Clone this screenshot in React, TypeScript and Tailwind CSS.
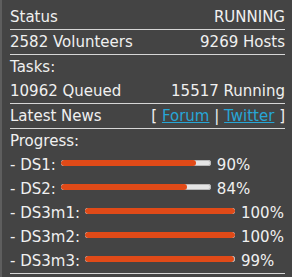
import React from "react";

const Bar = ({ pct }: { pct: number }) => (
  <div className="w-[150px] h-[6px] rounded-full bg-[#e4e4e4] overflow-hidden self-start mt-[7px] shadow-[inset_0_0_0_1px_#b8b8b8]">
    <div className="h-full rounded-full bg-[#e04a18]" style={{ width: `${pct}%` }} />
  </div>
);

const ProgRow = ({ label, pct, last }: { label: string; pct: number; last?: boolean }) => (
  <div className={`flex h-[24px] items-center gap-[5px] leading-[24px] ${last ? "border-b border-[#d6d6d6] h-[25px]" : ""}`}>
    <span className="self-start">{label}</span>
    <Bar pct={pct} />
    <span className="self-start pl-[1px]">{pct}%</span>
  </div>
);

export default function App() {
  return (
    <div
      className="w-[292px] h-[277px] bg-[#444444] border-l-2 border-[#5e5e5e] pl-[8px] pr-[7px] pt-[5px] text-[#f0f0f0] text-[15px] leading-[24px]"
      style={{ fontFamily: '"DejaVu Sans", sans-serif' }}
    >
      <div className="flex justify-between h-[25px] border-b border-[#d6d6d6]">
        <span>Status</span>
        <span>RUNNING</span>
      </div>
      <div className="flex justify-between h-[25px] border-b border-[#d6d6d6]">
        <span>2582 Volunteers</span>
        <span>9269 Hosts</span>
      </div>
      <div className="h-[24px]">Tasks:</div>
      <div className="flex justify-between h-[25px] border-b border-[#d6d6d6]">
        <span>10962 Queued</span>
        <span>15517 Running</span>
      </div>
      <div className="flex justify-between h-[25px] border-b border-[#d6d6d6]">
        <span>Latest News</span>
        <span>
          [ <a className="text-[#27a6d6] underline" href="#">Forum</a> |{" "}
          <a className="text-[#27a6d6] underline" href="#">Twitter</a> ]
        </span>
      </div>
      <div className="h-[24px]">Progress:</div>
      <ProgRow label="- DS1:" pct={90} />
      <ProgRow label="- DS2:" pct={84} />
      <ProgRow label="- DS3m1:" pct={100} />
      <ProgRow label="- DS3m2:" pct={100} />
      <ProgRow label="- DS3m3:" pct={99} last />
    </div>
  );
}
